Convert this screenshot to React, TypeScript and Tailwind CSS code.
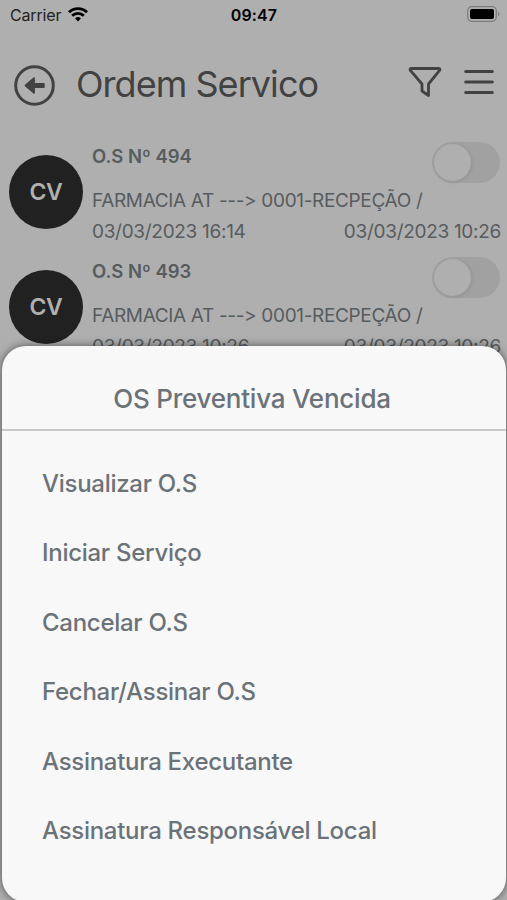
import { memo } from "react";

const ORDERS = [
  {
    id: "494",
    initials: "CV",
    place: "FARMACIA AT ---> 0001-RECPEÇÃO /",
    start: "03/03/2023 16:14",
    end: "03/03/2023 10:26",
  },
  {
    id: "493",
    initials: "CV",
    place: "FARMACIA AT ---> 0001-RECPEÇÃO /",
    start: "03/03/2023 10:26",
    end: "03/03/2023 10:26",
  },
];

const ACTIONS = [
  "Visualizar O.S",
  "Iniciar Serviço",
  "Cancelar O.S",
  "Fechar/Assinar O.S",
  "Assinatura Executante",
  "Assinatura Responsável Local",
];

function StatusBar() {
  return (
    <div className="grid h-[30px] grid-cols-3 items-center pl-[10px] pr-[7px] text-black">
      <div className="flex items-center gap-[7px]">
        <span className="text-[16px] leading-none tracking-[-0.15px] text-[#222]">Carrier</span>
        <svg className="-mt-px" width="20" height="15" viewBox="0 0 20 15" fill="none" stroke="currentColor" strokeWidth="2.9">
          <path d="M1 5.3a12.8 12.8 0 0 1 18 0" />
          <path d="M4.2 8.8a8.2 8.2 0 0 1 11.6 0" />
          <path d="M10 14.4 7.1 11.5a4.1 4.1 0 0 1 5.8 0z" fill="currentColor" stroke="none" />
        </svg>
      </div>
      <span className="pr-[2px] text-center text-[16px] font-semibold leading-none tracking-[0.1px]">09:47</span>
      <svg className="-mt-[2px] justify-self-end" width="33" height="16" viewBox="0 0 33 16" fill="none">
        <rect x="0.7" y="0.7" width="28.6" height="14.6" rx="4" stroke="#7c7c7c" strokeWidth="1.2" />
        <rect x="3" y="3" width="24" height="10" rx="2" fill="#000" />
        <path d="M31 5.5c1.7.8 1.7 4.2 0 5z" fill="#7c7c7c" />
      </svg>
    </div>
  );
}

function Header() {
  return (
    <header className="flex h-[110px] items-center pl-[14px] pr-[13px] text-[#424242]">
      <button aria-label="Voltar">
        <svg width="41" height="41" viewBox="0 0 41 41" fill="none">
          <circle cx="20.5" cy="20.5" r="18.8" stroke="currentColor" strokeWidth="3" />
          <path
            d="M11.5 20.5 20 13.200v5.600h9.800v3.400H20v5.600z"
            fill="currentColor"
            stroke="currentColor"
            strokeWidth="1.8"
            strokeLinejoin="round"
          />
        </svg>
      </button>
      <h1 className="mb-[2px] ml-[21px] flex-1 whitespace-nowrap text-[36px] leading-none tracking-[-0.95px]">Ordem Servico</h1>
      <button aria-label="Filtrar" className="mb-[6px]">
        <svg width="34" height="30" viewBox="0 0 34 30" fill="none" stroke="currentColor" strokeWidth="2.8" strokeLinejoin="round">
          <path d="M3 1.5h28c1 0 1.2.9.6 1.900L20.500 17v11.500L14 24v-7L2.400 3.400C1.800 2.400 2 1.500 3 1.500z" />
        </svg>
      </button>
      <button aria-label="Menu" className="mb-[6px] ml-[22px]">
        <svg width="30" height="26" viewBox="0 0 30 26" fill="none" stroke="currentColor" strokeWidth="3" strokeLinecap="round">
          <path d="M1.7 2.500h26.600M1.700 13h26.600M1.700 23.500h26.600" />
        </svg>
      </button>
    </header>
  );
}

function Toggle() {
  return (
    <span className="mr-[1px] flex h-[41px] w-[68px] rounded-full bg-[#a1a1a1] p-[2px]">
      <span className="h-[37px] w-[37px] rounded-full bg-[#afafaf] shadow-[1px_1px_4px_rgba(0,0,0,0.1)]" />
    </span>
  );
}

function OrderRow({ order }: { order: (typeof ORDERS)[number] }) {
  return (
    <li className="flex h-[115px] pl-[9px] pr-[6px] pt-[2px] text-[#575c5f]">
      <div className="mt-[13px] flex h-[74px] w-[74px] shrink-0 items-center justify-center rounded-full bg-[#212121] text-[23px] font-semibold tracking-[-0.3px] text-[#b0b0b0]">
        {order.initials}
      </div>
      <div className="ml-[9px] min-w-0 flex-1 whitespace-nowrap">
        <div className="flex h-[43px] justify-between">
          <span className="pt-[4px] text-[18.5px] font-semibold leading-[20px]">O.S Nº {order.id}</span>
          <Toggle />
        </div>
        <p className="text-[19px] leading-[31px] tracking-[-0.34px]">{order.place}</p>
        <div className="flex justify-between text-[19px] leading-[31px] tracking-[-0.3px]">
          <span>{order.start}</span>
          <span>{order.end}</span>
        </div>
      </div>
    </li>
  );
}

function ActionSheet() {
  return (
    <div
      className="absolute left-[2px] top-[346px] h-[556px] w-[504px] rounded-[24px] bg-[#f8f8f8] text-[#6b7278] shadow-[0_0_8px_rgba(0,0,0,0.55)]"
      role="dialog"
      aria-modal="true"
    >
      <h2 className="flex h-[85px] items-center justify-center whitespace-nowrap border-b-2 border-[#c8c9c9] pr-[4px] pt-[21px] text-[26px] font-[550] tracking-[-0.22px]">
        OS Preventiva Vencida
      </h2>
      <ul className="pt-[18px]">
        {ACTIONS.map((label) => (
          <li key={label} className="flex h-[69.5px] items-center whitespace-nowrap pl-[40px] text-[24px] font-[550] tracking-[-0.28px]">
            {label}
          </li>
        ))}
      </ul>
    </div>
  );
}

function App() {
  return (
    <main className="relative h-[900px] w-[507px] overflow-hidden bg-[#afafaf] font-['Inter','Liberation_Sans',sans-serif] [font-feature-settings:'calt'_0,'liga'_0]">
      <StatusBar />
      <Header />
      <ul>
        {ORDERS.map((order) => (
          <OrderRow key={order.id} order={order} />
        ))}
      </ul>
      <ActionSheet />
    </main>
  );
}

export default memo(App);
